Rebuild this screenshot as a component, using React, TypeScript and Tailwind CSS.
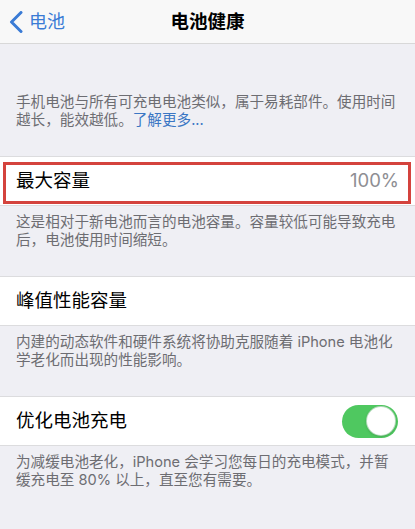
import React from "react";

const font = { fontFamily: 'Inter, "Noto Sans CJK SC", sans-serif' };

function Footer({ lines, link, className }: { lines: React.ReactNode[]; link?: string; className: string }) {
  return (
    <div className={`px-4 text-[14.6px] leading-[17.5px] text-[#6d6d72] ${className}`}>
      {lines.map((l, i) => (
        <div key={i} className="whitespace-nowrap">
          {l}
        </div>
      ))}
    </div>
  );
}

export default function App() {
  return (
    <div className="w-[415px] h-[529px] bg-[#efeff4] overflow-hidden" style={font}>
      <div className="relative h-[44px] bg-[#f8f8f8] border-b border-[#d8d8d8] flex items-center justify-center">
        <div className="absolute left-[9px] top-0 h-[43px] flex items-center text-[#3a7bd5]">
          <svg width="14" height="22" viewBox="0 0 14 22" className="mr-[6px]">
            <path d="M12 1.5 L2.5 11 L12 20.5" fill="none" stroke="#3a7bd5" strokeWidth="3" strokeLinecap="round" strokeLinejoin="round" />
          </svg>
          <span className="text-[18px] leading-none">电池</span>
        </div>
        <span className="text-[18.5px] font-bold text-black leading-none">电池健康</span>
      </div>

      <div className="px-4 pt-[49px] pb-[27px] text-[14.6px] leading-[18px] text-[#6d6d72]">
        <div className="whitespace-nowrap">手机电池与所有可充电电池类似，属于易耗部件。使用时间</div>
        <div className="whitespace-nowrap">
          越长，能效越低。<span className="text-[#3a76c4]">了解更多...</span>
        </div>
      </div>

      <div className="relative h-[50px] bg-white border-y border-[#dcdcde] flex items-center justify-between px-4">
        <span className="text-[18.5px] text-black">最大容量</span>
        <span className="text-[18.5px] text-[#8e8e93]">100%</span>
        <div className="absolute left-[3px] top-[5px] w-[408px] h-[42px] border-[3px] border-[#d4433d]" />
      </div>

      <Footer
        className="pt-[8px] pb-[27px]"
        lines={["这是相对于新电池而言的电池容量。容量较低可能导致充电", "后，电池使用时间缩短。"]}
      />

      <div className="h-[50px] bg-white border-y border-[#dcdcde] flex items-center px-4">
        <span className="text-[18.5px] text-black">峰值性能容量</span>
      </div>

      <Footer
        className="pt-[8px] pb-[27px]"
        lines={["内建的动态软件和硬件系统将协助克服随着 iPhone 电池化", "学老化而出现的性能影响。"]}
      />

      <div className="h-[50px] bg-white border-y border-[#dcdcde] flex items-center justify-between px-4">
        <span className="text-[18.5px] text-black">优化电池充电</span>
        <div className="w-[56px] h-[33px] rounded-full bg-[#4fc860] flex items-center justify-end pr-[2px] mr-[1px]">
          <div className="w-[30px] h-[30px] rounded-full bg-white border border-[#3fa351]/40 shadow-sm" />
        </div>
      </div>

      <Footer
        className="pt-[8px] pb-[27px]"
        lines={["为减缓电池老化，iPhone 会学习您每日的充电模式，并暂", "缓充电至 80% 以上，直至您有需要。"]}
      />
    </div>
  );
}
